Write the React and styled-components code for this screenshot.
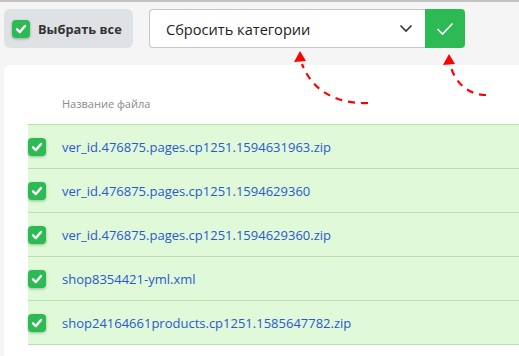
import React from "react";
import styled, { createGlobalStyle } from "styled-components";

const GlobalStyle = createGlobalStyle`
  html, body {
    margin: 0;
    padding: 0;
    background: #f5f5f5;
    font-family: "Open Sans", "Noto Sans", sans-serif;
  }
  * { box-sizing: border-box; }
`;

const Page = styled.div`
  position: relative;
  width: 519px;
  height: 356px;
  overflow: hidden;
  border-top: 2px solid #c4c4c4;
  background: #f5f5f5;
`;

const Toolbar = styled.div`
  display: flex;
  align-items: flex-start;
  padding: 7px 0 0 4px;
  height: 63px;
`;

const SelectAll = styled.button`
  display: flex;
  align-items: center;
  gap: 8px;
  width: 129px;
  height: 39px;
  padding: 0 0 0 8px;
  border: none;
  border-radius: 6px;
  background: #dfe2e5;
  font-family: inherit;
  font-size: 12.8px;
  font-weight: 700;
  color: #333;
  cursor: pointer;
`;

const Check = styled.span`
  display: inline-flex;
  align-items: center;
  justify-content: center;
  width: ${(p) => p.$size}px;
  height: ${(p) => p.$size}px;
  border-radius: 4px;
  background: #2dba55;
  box-shadow: 0 1px 3px rgba(0, 80, 20, 0.35);
  flex-shrink: 0;
`;

const SelectGroup = styled.div`
  display: flex;
  margin-left: 16px;
  height: 39px;
`;

const Select = styled.div`
  width: 276px;
  display: flex;
  align-items: center;
  justify-content: space-between;
  padding: 0 12px 0 16px;
  background: #fff;
  border: 1px solid #c6c6c6;
  border-right: none;
  border-radius: 4px 0 0 4px;
  font-size: 14.6px;
  color: #222;
`;

const ApplyButton = styled.button`
  width: 40px;
  border: none;
  border-radius: 0 4px 4px 0;
  background: #2dba55;
  display: flex;
  align-items: center;
  justify-content: center;
  cursor: pointer;
`;

const Card = styled.div`
  margin-left: 4px;
  background: #fff;
  border-radius: 6px 0 0 0;
  padding: 31px 0 0 24px;
  height: 300px;
`;

const HeaderCell = styled.div`
  padding-left: 34px;
  font-size: 11px;
  color: #8a8a8a;
  height: 28px;
`;

const List = styled.div`
  border-top: 1px solid #b7e2af;
`;

const Row = styled.div`
  display: flex;
  align-items: center;
  gap: 16px;
  height: 44px;
  background: #e0f9d8;
  border-bottom: 1px solid #b7e2af;
`;

const FileName = styled.a`
  font-size: 13px;
  color: #2a58d2;
  text-decoration: none;
`;

const Arrows = styled.svg`
  position: absolute;
  left: 0;
  top: 0;
  pointer-events: none;
`;

const Tick = ({ size = 12, width = 2.4 }) => (
  <svg width={size} height={size} viewBox="0 0 12 12">
    <path d="M2 6.3 L4.9 9.1 L10 2.9" fill="none" stroke="#fff" strokeWidth={width} strokeLinecap="round" strokeLinejoin="round" />
  </svg>
);

const files = [
  "ver_id.476875.pages.cp1251.1594631963.zip",
  "ver_id.476875.pages.cp1251.1594629360",
  "ver_id.476875.pages.cp1251.1594629360.zip",
  "shop8354421-yml.xml",
  "shop24164661products.cp1251.1585647782.zip",
];

export default function App() {
  return (
    <Page>
      <GlobalStyle />
      <Toolbar>
        <SelectAll>
          <Check $size={18}>
            <Tick />
          </Check>
          Выбрать все
        </SelectAll>
        <SelectGroup>
          <Select>
            Сбросить категории
            <svg width="14" height="9" viewBox="0 0 14 9">
              <path d="M1.5 1.5 L7 7 L12.5 1.5" fill="none" stroke="#333" strokeWidth="1.6" />
            </svg>
          </Select>
          <ApplyButton>
            <svg width="18" height="14" viewBox="0 0 18 14">
              <path d="M1.5 7 L6.5 12 L16.5 1.5" fill="none" stroke="#fff" strokeWidth="1.6" />
            </svg>
          </ApplyButton>
        </SelectGroup>
      </Toolbar>
      <Card>
        <HeaderCell>Название файла</HeaderCell>
        <List>
          {files.map((f) => (
            <Row key={f}>
              <Check $size={18}>
                <Tick />
              </Check>
              <FileName href="#">{f}</FileName>
            </Row>
          ))}
        </List>
      </Card>
      <Arrows width="519" height="356" viewBox="0 0 519 356">
        <path d="M368 101 C 335 102, 312 88, 302 62" fill="none" stroke="#f00" strokeWidth="2.2" strokeDasharray="7 6" />
        <path d="M300 49 L294 60 L306 59 Z" fill="#f00" />
        <path d="M486 93 C 468 93, 455 80, 451 65" fill="none" stroke="#f00" strokeWidth="2.2" strokeDasharray="7 6" />
        <path d="M449 52 L443 63 L455 62 Z" fill="#f00" />
      </Arrows>
    </Page>
  );
}
